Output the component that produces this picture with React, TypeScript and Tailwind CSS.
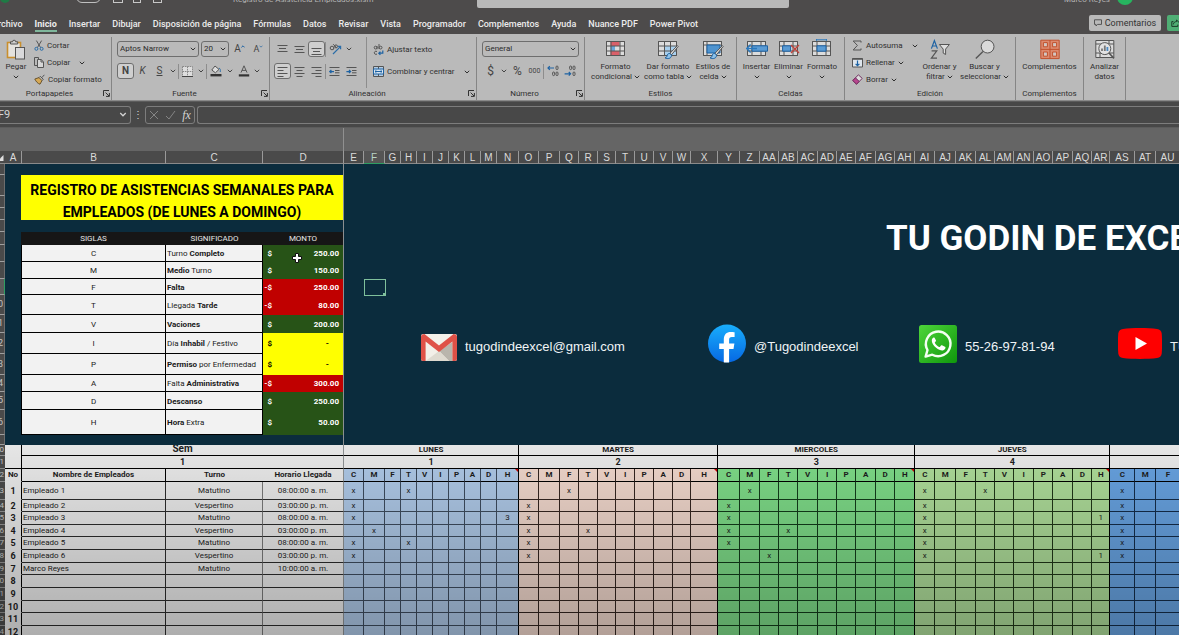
import type { ReactNode } from "react";

const UI = "font-[Roboto,sans-serif]";
const CELL = "font-[Roboto,sans-serif]";

/* ---------- small glyphs ---------- */

function Chevron({ className = "w-[6px] h-[4px]" }: { className?: string }) {
  return (
    <svg viewBox="0 0 6 4" className={`shrink-0 ${className}`} fill="none" stroke="currentColor" strokeWidth="1" aria-hidden="true">
      <path d="M.8.8 3 3 5.2.8" />
    </svg>
  );
}

function Icon({ size = "w-[12px] h-[12px]", box = "0 0 12 12", children }: { size?: string; box?: string; children: ReactNode }) {
  return (
    <svg viewBox={box} className={`shrink-0 ${size}`} fill="none" stroke="#555" strokeWidth="1" aria-hidden="true">
      {children}
    </svg>
  );
}

const PasteIcon = () => (
  <Icon size="w-[20px] h-[22px]" box="0 0 20 22">
    <rect x="1.5" y="3.5" width="13" height="15" fill="#e4e2de" stroke="#c98f2e" strokeWidth="1.6" />
    <path d="M4.5 5V2.8h2a1.6 1.6 0 0 1 3.2 0h2V5z" fill="#cfcfcf" stroke="#555" />
    <rect x="9.5" y="8.5" width="9" height="11.5" fill="#d9d9db" stroke="#555" />
  </Icon>
);
const CutIcon = () => (
  <Icon size="w-[10px] h-[11px]" box="0 0 10 11">
    <path d="M2.4.6 6.6 7.6M7.6.6 3.4 7.6" />
    <circle cx="2.4" cy="8.8" r="1.5" stroke="#2a6da8" />
    <circle cx="7.6" cy="8.8" r="1.5" stroke="#2a6da8" />
  </Icon>
);
const CopyIcon = () => (
  <Icon size="w-[10px] h-[11px]" box="0 0 10 11">
    <path d="M3.5 8.5h-3v-8h4v2" />
    <path d="M3.5 2.5h3.6l2.4 2.3v5.7h-6z" fill="#d6d6d6" />
    <path d="M7 2.6V5h2.4" />
  </Icon>
);
const BrushIcon = () => (
  <Icon size="w-[11px] h-[11px]" box="0 0 11 11">
    <path d="M.8 5 5 3.6l3 3L6 10.2C3.8 9.6 2 7.6.8 5z" fill="#d7a955" stroke="#6b5530" />
    <path d="m5 3.6 1.3-1.3 3 3L8 6.6M7.8 3.6 10.4.8" />
  </Icon>
);
const AlignIcon = ({ lines }: { lines: string }) => (
  <Icon size="w-[11px] h-[11px]" box="0 0 11 11">
    <path d={lines} />
  </Icon>
);
const CellsIcon = () => (
  <Icon size="w-[11px] h-[11px]" box="0 0 11 11">
    <path d="M.5.5h10v10H.5zM5.5.5v10M.5 5.5h10" fill="#dedede" stroke="#888" strokeDasharray="1.6 .8" />
    <path d="M0 10.5h11" stroke="#444" />
  </Icon>
);
const FillIcon = () => (
  <Icon size="w-[12px] h-[12px]" box="0 0 12 12">
    <path d="M5 1 1.8 5 5.4 7.8 9 4.4z" fill="#ddd" />
    <path d="M9 3c1.4.8 1.6 2 1.2 4" stroke="#2a6da8" />
    <path d="M.5 10.2h11" strokeWidth="2.4" stroke="#333" />
  </Icon>
);
const FontColorIcon = () => (
  <Icon size="w-[12px] h-[12px]" box="0 0 12 12">
    <path d="M3 7.6 6 .8l3 6.8M4 5.4h4" />
    <path d="M.8 10.4h10.4" strokeWidth="2.2" stroke="#333" />
  </Icon>
);
const OrientIcon = () => (
  <Icon size="w-[13px] h-[12px]" box="0 0 13 12">
    <circle cx="3" cy="5" r="1.8" />
    <path d="m4.600 6.200.600-.400M4.200 1.200l3.200 3.400" />
    <circle cx="7" cy="3.400" r="1.500" />
    <path d="M4 11 11.400 3.600M8.800 3.400h2.800v2.800" stroke="#2a6da8" strokeWidth="1.2" />
  </Icon>
);
const IndentIcon = ({ out = false }: { out?: boolean }) => (
  <Icon size="w-[11px] h-[11px]" box="0 0 11 11">
    <path d="M.5 1.5h10M6 4.5h4.5M6 6.800h4.5M.5 9.5h10" />
    <path d={out ? "M5 5.6H.8M2.4 4 .8 5.6l1.6 1.6" : "M.4 5.6h4.2M3 4l1.6 1.6L3 7.2"} stroke="#1d62a3" strokeWidth="1.2" />
  </Icon>
);
const WrapIcon = () => (
  <Icon size="w-[11px] h-[12px]" box="0 0 11 12">
    <circle cx="2.6" cy="3.6" r="1.4" />
    <path d="M4 2v3.2M6 0v5" />
    <circle cx="7.6" cy="3.6" r="1.4" />
    <path d="M4 7.6a1.6 1.6 0 1 0 0 2.4" />
    <path d="M9.8 6.4v2.8H6M7.4 7.6 5.8 9.2l1.6 1.6" stroke="#1d62a3" strokeWidth="1.2" />
  </Icon>
);
const MergeIcon = () => (
  <Icon size="w-[11px] h-[11px]" box="0 0 11 11">
    <path d="M.5.5h10v10H.5zM5.5.5v2.4M5.5 8v2.4" fill="#b3cce4" />
    <path d="M.5 3h10v5H.5z" fill="#d9e5f0" stroke="#1d62a3" />
    <path d="M2 5.5h7M3.4 4.2 2 5.5l1.4 1.3M7.6 4.2 9 5.5 7.6 6.8" stroke="#1d62a3" />
  </Icon>
);
const DecimalIcon = ({ less = false }: { less?: boolean }) => (
  <Icon size="w-[12px] h-[12px]" box="0 0 12 12">
    <rect x="9" y="1" width="2" height="3.6" rx="1" />
    <rect x="9" y="7" width="2" height="3.6" rx="1" />
    {less ? <rect x="5.6" y="1" width="2" height="3.6" rx="1" /> : <rect x="5.6" y="7" width="2" height="3.6" rx="1" />}
    <path d={less ? "M.6 8.8h6M4.8 7l1.8 1.8-1.8 1.8" : "M7 3H1M2.8 1.2 1 3l1.8 1.8"} stroke="#1d62a3" strokeWidth="1.2" />
  </Icon>
);

function GridIcon({ children }: { children?: ReactNode }) {
  return (
    <Icon size="w-[22px] h-[21px]" box="0 0 22 21">
      <path d="M1.5 2.5h18v14h-18z" fill="#dcdcdc" />
      {children}
    </Icon>
  );
}
const GRID = "M1.5 2.5h18v14h-18zM1.5 7h18M1.5 12h18M6 2.5v14M15 2.5v14";
const BRUSH = (
  <>
    <path d="M20.4 6.6 13 14.2l1.6 1.6 6.6-8.4z" fill="#dcdcdc" />
    <path d="M12.8 14.4c-2 0-2.6 1.2-2.8 2.8-.2 1-1 1.4-2 1.6 2.8 1.6 6.4.8 6.6-2.6z" fill="#8fc3ea" stroke="#1d62a3" />
  </>
);
const CondIcon = () => (
  <GridIcon>
    <path d="M5.5 2.5h9v4.4h-9zM5.5 12h9v4.5h-9z" fill="#d9606a" stroke="none" />
    <path d="M5.5 7h4.5v5H5.5z" fill="#6aa5d8" stroke="none" />
    <path d={GRID} />
  </GridIcon>
);
const TableIcon = () => (
  <GridIcon>
    <path d="M8 7h11.5v9.5H8z" fill="#a9d0ee" stroke="none" />
    <path d="M1.5 2.5h18v14h-18zM1.5 7h18M1.5 12h18M7.5 2.5v14M13.5 2.5v14" />
    {BRUSH}
  </GridIcon>
);
const StylesIcon = () => (
  <GridIcon>
    <path d="M1.5 2.5h18v14h-18zM1.5 6h18M5 2.5v14" />
    <path d="M5 6h13v8H5z" fill="#4f94d0" stroke="#1d62a3" />
    {BRUSH}
  </GridIcon>
);
const InsertIcon = () => (
  <GridIcon>
    <path d={GRID} />
    <path d="M6 6.8h15.5v5.4H6z" fill="#5a9bd4" stroke="#1d62a3" />
    <path d="M11 9.5H1M4.6 5.6.8 9.5l3.8 3.9" stroke="#2a78bd" strokeWidth="1.4" />
  </GridIcon>
);
const DeleteIcon = () => (
  <GridIcon>
    <path d={GRID} />
    <path d="M4.6 6.8h8v5.4h-8z" fill="#5a9bd4" stroke="#1d62a3" />
    <path d="m13 6 8 8M21 6l-8 8" stroke="#c1443c" strokeWidth="1.4" />
  </GridIcon>
);
const FormatIcon = () => (
  <GridIcon>
    <path d={GRID} />
    <path d="M6 6.8h9v5.4H6z" fill="#5a9bd4" stroke="#1d62a3" />
    <path d="M5.5.8h10M5.5 0v1.8M15.5 0v1.8" stroke="#2a78bd" />
  </GridIcon>
);
const SortIcon = () => (
  <Icon size="w-[22px] h-[21px]" box="0 0 22 21">
    <path d="M2.4 9.6 5.4 1.6l3 8M3.4 7h4" stroke="#1d62a3" strokeWidth="1.2" />
    <path d="M2.6 11.8h5.2l-5.4 7.4H8" strokeWidth="1.2" />
    <path d="M10.4 5.5h10l-3.8 4.6v5.4l-2.4-1.4v-4z" fill="#dedede" />
  </Icon>
);
const FindIcon = () => (
  <Icon size="w-[22px] h-[21px]" box="0 0 22 21">
    <circle cx="13.6" cy="7.6" r="6.4" fill="#dadada" />
    <path d="M9 12.4 1.8 19.6" strokeWidth="1.4" />
  </Icon>
);
const AddinsIcon = () => (
  <Icon size="w-[20px] h-[21px]" box="0 0 20 21">
    <path d="M.8 1.2h18.4v18.4H.8zM10 1v18.6M.8 10.4h18.4" fill="#dd8a6e" stroke="#c2512c" />
    <path d="M3.4 3.6h4v4.2h-4zM12.6 3.6h4v4.2h-4zM3.4 13h4v4.2h-4zM12.6 13h4v4.2h-4z" fill="#d3c7c2" stroke="#c2512c" />
  </Icon>
);
const AnalyzeIcon = () => (
  <Icon size="w-[20px] h-[21px]" box="0 0 20 21">
    <path d="M.8 1.5h18v17H.8zM.8 5h18M.8 14h18M5 14v4.5M14 1.5V5" fill="#dcdcdc" />
    <circle cx="9.8" cy="9.6" r="6" fill="#e2e2e2" />
    <path d="M7 12V9.4M9.8 12V6.6" strokeWidth="1.8" stroke="#777" />
    <path d="M12.4 12V8" strokeWidth="1.8" stroke="#4a8ac4" />
    <path d="m14 14 5 5.4" strokeWidth="1.6" />
  </Icon>
);
const SigmaIcon = () => (
  <Icon size="w-[11px] h-[11px]" box="0 0 11 11">
    <path d="M9 2.6V1H1.2l4.2 4.4L1.2 10H9V8.4" />
  </Icon>
);
const FillDownIcon = () => (
  <Icon size="w-[11px] h-[11px]" box="0 0 11 11">
    <path d="M.5 1.5h10v8.5H.5z" fill="#dfe6ec" />
    <path d="M.5 2h10" strokeWidth="1.6" />
    <path d="M5.5 3.6v5M3.6 6.8l1.9 1.9 1.9-1.9" stroke="#1d62a3" strokeWidth="1.2" />
  </Icon>
);
const EraserIcon = () => (
  <Icon size="w-[11px] h-[11px]" box="0 0 11 11">
    <path d="m6.4.8 3.8 3.6-5.6 5.8L.8 6.6z" fill="#ddd" stroke="#703060" />
    <path d="M3.4 3.8 7.2 7.4l-2.6 2.8L.8 6.6z" fill="#b8468e" stroke="#703060" />
  </Icon>
);

/* ---------- ribbon ---------- */

function Group({ width, caption, launcher = false, children }: { width: string; caption: string; launcher?: boolean; children: ReactNode }) {
  return (
    <section className={`flex shrink-0 flex-col border-r border-[#858585] ${width}`}>
      <div className="flex h-[51px]">{children}</div>
      <div className="flex h-[11px] items-center">
        <span className="flex-1 text-center text-[8px] leading-[11px]">{caption}</span>
        {launcher && (
          <button type="button" aria-label={`Opciones de ${caption}`} className="w-[12px]">
            <svg viewBox="0 0 7 7" className="ml-1 h-[7px] w-[7px]" fill="none" stroke="#333" aria-hidden="true">
              <path d="M6 .5H.5V6M2.6 2.6 6 6M6.4 3v3.4H3" />
            </svg>
          </button>
        )}
      </div>
    </section>
  );
}

function SmallButton({ icon, label, arrow = false, far = false }: { icon: ReactNode; label: string; arrow?: boolean; far?: boolean }) {
  return (
    <button type="button" className="flex h-[17px] items-center gap-[3px] whitespace-nowrap text-[8px] leading-[10px]">
      {icon}
      <span>{label}</span>
      {arrow && <span className={far ? "pl-[6px]" : ""}><Chevron /></span>}
    </button>
  );
}

function BigButton({ icon, top, bottom, arrow = false, width }: { icon: ReactNode; top: string; bottom?: string; arrow?: boolean; width: string }) {
  return (
    <button type="button" className={`flex shrink-0 flex-col items-center pt-[2px] text-[8px] leading-[10px] whitespace-nowrap ${width}`}>
      <span className="flex h-[23px] items-start">{icon}</span>
      <span>{top}</span>
      <span className="flex h-[10px] items-center gap-[2px]">
        {bottom}
        {arrow && <Chevron />}
      </span>
    </button>
  );
}

function Tool({ label, on = false, width = "w-[17px]", children }: { label: string; on?: boolean; width?: string; children: ReactNode }) {
  return (
    <button
      type="button"
      aria-label={label}
      className={`flex h-[16px] shrink-0 items-center justify-center rounded-[3px] text-[10px] leading-none text-[#444] ${width} ${on ? "border border-[#6e6e6e] bg-[#cfcfcf]" : ""}`}
    >
      {children}
    </button>
  );
}

const Sep = () => <span className="h-[15px] w-px shrink-0 bg-[#8d8d8d]" />;

function Picker({ label, value, width }: { label: string; value: string; width: string }) {
  return (
    <label className={`relative flex h-[16px] shrink-0 items-center rounded-[3px] border border-[#6e6e6e] ${width}`}>
      <select aria-label={label} className="h-[14px] w-full appearance-none bg-transparent pl-[2px] text-[8px] leading-[12px] text-[#2c2c2c]">
        <option>{value}</option>
      </select>
      <span className="pointer-events-none absolute right-[2px] text-[#333]">
        <Chevron />
      </span>
    </label>
  );
}

const TABS = ["Archivo", "Inicio", "Insertar", "Dibujar", "Disposición de página", "Fórmulas", "Datos", "Revisar", "Vista", "Programador", "Complementos", "Ayuda", "Nuance PDF", "Power Pivot"];

function TitleBar() {
  return (
    <div className="flex h-[8px] items-end overflow-hidden text-[8px] leading-[12px] text-[#b5b5b5]">
      <div className="flex w-[233px] shrink-0 items-end pb-[5px]">
        <span className="h-[12px] w-[10px] rounded-full bg-[#1f7a45]" />
        <span className="h-[12px] w-[66px] pl-[10px]">Autoguardado</span>
        <span className="h-[12px] w-[25px] rounded-full border border-[#c0c0c0]" />
        <span className="ml-[12px] h-[12px] w-[10px] border border-[#c8c8c8]" />
        <span className="ml-[10px] h-[12px] w-[8px] border border-[#c8c8c8]" />
        <span className="ml-[12px] h-[12px] w-[9px] border border-[#c8c8c8]" />
      </div>
      <span className="w-[244px] shrink-0 whitespace-nowrap pb-[3px] leading-[10px]">Registro de Asistencia Empleados.xlsm</span>
      <div className="flex h-[14px] w-[312px] shrink-0 items-center rounded-b-[2px] bg-[#b9b9b9] pb-[6px] pl-[34px] text-[#666]">Buscar</div>
      <div className="flex flex-1 items-end justify-end gap-[7px] pr-[46px]">
        <span className="pb-[3px] leading-[10px]">Marco Reyes</span>
        <span className="mb-[3px] h-[16px] w-[16px] rounded-full bg-[#27b45f]" />
      </div>
    </div>
  );
}

function Tabs() {
  return (
    <div className="flex h-[26px] items-center">
      <nav className="-ml-[8px] flex items-center gap-[12px] pt-[6px] text-[9px] font-medium leading-[12px] text-[#ececec]">
        {TABS.map((t) => (
          <a key={t} href="#" className={`relative whitespace-nowrap ${t === "Inicio" ? "font-bold" : ""}`}>
            {t}
            {t === "Inicio" && <span className="absolute inset-x-0 -bottom-[2px] h-[2px] bg-[#7fb79c]" />}
          </a>
        ))}
      </nav>
      <div className="ml-auto flex shrink-0 gap-[6px] pt-[4px]">
        <button type="button" className="flex h-[16px] w-[72px] items-center justify-center gap-[3px] rounded-[2px] bg-[#b9b9b9] text-[9px] leading-none text-[#333]">
          <Icon size="w-[8px] h-[8px]" box="0 0 8 8">
            <path d="M.5.8h7v4.6H3.6L2 7V5.4H.5z" />
          </Icon>
          Comentarios
        </button>
        <button type="button" aria-label="Compartir" className="flex h-[16px] w-[12px] items-center justify-end rounded-l-[2px] bg-[#4fae74]">
          <Icon size="w-[8px] h-[8px]" box="0 0 8 8">
            <path d="M2.4 2.6H.8v4.8h6V5.6M2.4 5.4c.2-2 1.4-2.8 3.2-2.8V1L8 3.4" stroke="#1c3a28" />
          </Icon>
        </button>
      </div>
    </div>
  );
}

function Ribbon() {
  return (
    <div className="flex h-[67px] overflow-hidden border-b border-[#8a8a8a] bg-[#bababa] pt-[3px] text-[#303030]">
      <Group width="w-[112px]" caption="Portapapeles" launcher>
        <BigButton icon={<PasteIcon />} top="Pegar" arrow width="ml-[3px] w-[26px]" />
        <div className="ml-[5px] flex flex-col">
          <SmallButton icon={<CutIcon />} label="Cortar" />
          <SmallButton icon={<CopyIcon />} label="Copiar" arrow far />
          <SmallButton icon={<BrushIcon />} label="Copiar formato" />
        </div>
      </Group>

      <Group width="w-[158px]" caption="Fuente" launcher>
        <div className="flex flex-col gap-[6px] pt-[4px] pl-[5px]">
          <div className="flex items-center gap-[2px]">
            <Picker label="Fuente" value="Aptos Narrow" width="w-[82px]" />
            <Picker label="Tamaño de fuente" value="20" width="w-[28px]" />
            <Tool label="Aumentar tamaño">
              A<span className="pb-[5px] text-[#1d62a3]"><svg viewBox="0 0 4 3" className="h-[3px] w-[4px]" fill="none" stroke="currentColor" aria-hidden="true"><path d="M.4 2.4 2 .8l1.6 1.6" /></svg></span>
            </Tool>
            <Tool label="Reducir tamaño"><span className="text-[9px]">A</span><span className="pb-[5px] text-[#1d62a3]"><Chevron className="h-[3px] w-[4px]" /></span></Tool>
          </div>
          <div className="flex items-center">
            <Tool label="Negrita" on><b>N</b></Tool>
            <Tool label="Cursiva"><i>K</i></Tool>
            <Tool label="Subrayado"><span className="underline">S</span></Tool>
            <Tool label="Opciones de subrayado" width="w-[10px]"><Chevron /></Tool>
            <Sep />
            <Tool label="Bordes"><CellsIcon /></Tool>
            <Tool label="Opciones de bordes" width="w-[10px]"><Chevron /></Tool>
            <Sep />
            <Tool label="Color de relleno" width="w-[18px]"><FillIcon /></Tool>
            <Tool label="Opciones de relleno" width="w-[10px]"><Chevron /></Tool>
            <Tool label="Color de fuente"><FontColorIcon /></Tool>
            <Tool label="Opciones de color" width="w-[10px]"><Chevron /></Tool>
          </div>
        </div>
      </Group>

      <Group width="w-[207px]" caption="Alineación" launcher>
        <div className="flex w-[96px] flex-col gap-[6px] pt-[4px] pl-[4px]">
          <div className="flex items-center">
            <Tool label="Alinear arriba"><AlignIcon lines="M.5 1.5h10M2 4.5h7M.5 7.5h10" /></Tool>
            <Tool label="Alinear en medio"><AlignIcon lines="M.5 2.5h10M2 5.5h7M.5 8.5h10" /></Tool>
            <Tool label="Alinear abajo" on><AlignIcon lines="M.5 4.5h10M2 7.5h7M.5 10.5h10" /></Tool>
            <Sep />
            <Tool label="Orientación" width="w-[18px]"><OrientIcon /></Tool>
            <Tool label="Opciones de orientación" width="w-[10px]"><Chevron /></Tool>
          </div>
          <div className="flex items-center">
            <Tool label="Alinear a la izquierda" on><AlignIcon lines="M.5 1.5h10M.5 4.5h6M.5 7.5h10M.5 10.5h6" /></Tool>
            <Tool label="Centrar"><AlignIcon lines="M.5 1.5h10M2.5 4.5h6M.5 7.5h10M2.5 10.5h6" /></Tool>
            <Tool label="Alinear a la derecha"><AlignIcon lines="M.5 1.5h10M4.5 4.5h6M.5 7.5h10M4.5 10.5h6" /></Tool>
            <Sep />
            <Tool label="Disminuir sangría"><IndentIcon out /></Tool>
            <Tool label="Aumentar sangría"><IndentIcon /></Tool>
          </div>
        </div>
        <div className="flex flex-col gap-[5px] border-l border-[#8d8d8d] pt-[4px] pl-[6px]">
          <SmallButton icon={<WrapIcon />} label="Ajustar texto" />
          <SmallButton icon={<MergeIcon />} label="Combinar y centrar" arrow far />
        </div>
      </Group>

      <Group width="w-[108px]" caption="Número" launcher>
        <div className="flex flex-col gap-[6px] pt-[4px] pl-[5px]">
          <Picker label="Formato de número" value="General" width="w-[97px]" />
          <div className="flex items-center">
            <Tool label="Formato de moneda"><span className="text-[12px]">$</span></Tool>
            <Tool label="Opciones de moneda" width="w-[10px]"><Chevron /></Tool>
            <Tool label="Estilo porcentual"><span className="text-[12px]">%</span></Tool>
            <Tool label="Estilo millares"><span className="text-[7px]">000</span></Tool>
            <Sep />
            <Tool label="Aumentar decimales"><DecimalIcon /></Tool>
            <Tool label="Disminuir decimales"><DecimalIcon less /></Tool>
          </div>
        </div>
      </Group>

      <Group width="w-[152px]" caption="Estilos">
        <BigButton icon={<CondIcon />} top="Formato" bottom="condicional" arrow width="ml-[4px] w-[53px]" />
        <BigButton icon={<TableIcon />} top="Dar formato" bottom="como tabla" arrow width="w-[52px]" />
        <BigButton icon={<StylesIcon />} top="Estilos de" bottom="celda" arrow width="w-[38px]" />
      </Group>

      <Group width="w-[108px]" caption="Celdas">
        <BigButton icon={<InsertIcon />} top="Insertar" arrow width="ml-[3px] w-[33px]" />
        <BigButton icon={<DeleteIcon />} top="Eliminar" arrow width="w-[31px]" />
        <BigButton icon={<FormatIcon />} top="Formato" arrow width="w-[36px]" />
      </Group>

      <Group width="w-[171px]" caption="Edición">
        <div className="flex w-[74px] shrink-0 flex-col pl-[7px]">
          <SmallButton icon={<SigmaIcon />} label="Autosuma" arrow far />
          <SmallButton icon={<FillDownIcon />} label="Rellenar" arrow />
          <SmallButton icon={<EraserIcon />} label="Borrar" arrow />
        </div>
        <BigButton icon={<SortIcon />} top="Ordenar y" bottom="filtrar" arrow width="w-[41px]" />
        <BigButton icon={<FindIcon />} top="Buscar y" bottom="seleccionar" arrow width="w-[49px]" />
      </Group>

      <Group width="w-[68px]" caption="Complementos">
        <BigButton icon={<AddinsIcon />} top="Complementos" width="w-full" />
      </Group>

      <Group width="w-[42px]" caption="">
        <BigButton icon={<AnalyzeIcon />} top="Analizar" bottom="datos" width="w-full" />
      </Group>
    </div>
  );
}

function FormulaBar() {
  return (
    <div className="flex h-[27px] items-center border-y border-[#5c5c5c] bg-[#484848] text-[#d5d5d5]">
      <label className="relative flex h-[18px] w-[131px] items-center rounded-r-[3px] border border-l-0 border-[#7d7d7d]">
        <input aria-label="Cuadro de nombres" defaultValue="F9" className="-ml-[2px] w-full bg-transparent text-[11px] leading-[14px]" />
        <span className="absolute right-[3px]"><Chevron className="h-[5px] w-[8px]" /></span>
      </label>
      <span className="w-[14px] text-center text-[10px] leading-none">⋮</span>
      <div className="flex h-[18px] w-[50px] items-center justify-around rounded-[3px] border border-[#7d7d7d]">
        <button type="button" aria-label="Cancelar">
          <svg viewBox="0 0 10 10" className="h-[10px] w-[10px]" stroke="#858585" fill="none"><path d="m1 1 8 8M9 1 1 9" /></svg>
        </button>
        <button type="button" aria-label="Introducir">
          <svg viewBox="0 0 11 10" className="h-[10px] w-[11px]" stroke="#858585" fill="none"><path d="m1 6 3 3 6-8" /></svg>
        </button>
        <button type="button" className="font-['Liberation_Serif',serif] text-[12px] leading-none italic">fx</button>
      </div>
      <input aria-label="Barra de fórmulas" className="ml-[2px] h-[18px] min-w-0 flex-1 rounded-l-[3px] border border-r-0 border-[#7d7d7d] bg-transparent px-1 text-[10px]" />
    </div>
  );
}

/* ---------- sheet ---------- */

const WIDTHS = [
  5, 17, 144, 97, 81,
  20, 21, 16, 16, 16, 16, 16, 16, 16, 22,
  20, 21, 19, 19, 18, 19, 19, 19, 18, 27,
  22, 20, 19, 19, 20, 19, 19, 20, 19, 20,
  20, 21, 20, 19, 19, 20, 19, 20, 19, 18,
  25, 21, 24,
];

const LETTERS = "A B C D E F G H I J K L M N O P Q R S T U V W X Y Z AA AB AC AD AE AF AG AH AI AJ AK AL AM AN AO AP AQ AR AS AT AU".split(" ");

const Cols = () => (
  <colgroup>
    {WIDTHS.map((w, i) => (
      <col key={i} style={{ width: w }} />
    ))}
  </colgroup>
);

function ColumnHeaders() {
  return (
    <table className="w-full table-fixed border-separate border-spacing-0 bg-[#4a4a4a] font-['Liberation_Sans',sans-serif] text-[10px] leading-[10px] text-[#dadada]">
      <Cols />
      <thead>
        <tr>
          <th className="h-[13px] overflow-hidden border-b border-[#8a8a8a] p-0">
            <svg viewBox="0 0 5 11" className="block h-[11px] w-[5px]"><path d="M3.5 3v6H0V6.5z" fill="#e0e0e0" /></svg>
          </th>
          {LETTERS.map((l) => (
            <th
              key={l}
              scope="col"
              className={`h-[13px] overflow-hidden border-r border-b border-r-[#9a9a9a] px-0 pt-[2px] pb-0 text-center font-normal ${l === "F" ? "border-b-[#2f9e62] bg-[#555] text-[#b9d4c6]" : "border-b-[#8a8a8a]"}`}
            >
              {l}
            </th>
          ))}
        </tr>
      </thead>
    </table>
  );
}

const ROW_HEADS: [string, string][] = [
  ["h-[11px]", ""], ["h-[21px]", ""], ["h-[12px]", ""], ["h-[12px]", ""], ["h-[12px]", ""], ["h-[13px]", ""],
  ["h-[17px]", ""], ["h-[17px]", ""], ["h-[16px]", ""], ["h-[20px]", "0"], ["h-[18px]", "1"], ["h-[21px]", "2"],
  ["h-[21px]", "3"], ["h-[17px]", "4"], ["h-[18px]", "5"], ["h-[25px]", "6"], ["h-[10px]", ""],
];

const GREEN = "bg-[#275317] text-white";
const RED = "bg-[#c00000] text-white";
const YELLOW = "bg-[#ffff00] text-black";

const LEGEND: { key: string; text: ReactNode; sign: string; amount: string; tone: string; h: string }[] = [
  { key: "C", text: <>Turno <b>Completo</b></>, sign: "$", amount: "250.00", tone: GREEN, h: "h-[17px]" },
  { key: "M", text: <><b>Medio</b> Turno</>, sign: "$", amount: "150.00", tone: GREEN, h: "h-[17px]" },
  { key: "F", text: <b>Falta</b>, sign: "-$", amount: "250.00", tone: RED, h: "h-[16px]" },
  { key: "T", text: <>Llegada <b>Tarde</b></>, sign: "-$", amount: "80.00", tone: RED, h: "h-[20px]" },
  { key: "V", text: <b>Vaciones</b>, sign: "$", amount: "200.00", tone: GREEN, h: "h-[18px]" },
  { key: "I", text: <>Día <b>Inhabil</b> / Festivo</>, sign: "$", amount: "-", tone: YELLOW, h: "h-[21px]" },
  { key: "P", text: <><b>Permiso</b> por Enfermedad</>, sign: "$", amount: "-", tone: YELLOW, h: "h-[21px]" },
  { key: "A", text: <>Falta <b>Administrativa</b></>, sign: "-$", amount: "300.00", tone: RED, h: "h-[17px]" },
  { key: "D", text: <b>Descanso</b>, sign: "$", amount: "250.00", tone: GREEN, h: "h-[18px]" },
  { key: "H", text: <><b>Hora</b> Extra</>, sign: "$", amount: "50.00", tone: GREEN, h: "h-[25px]" },
];

function Legend() {
  return (
    <table className="w-full table-fixed border-separate border-spacing-0 text-[8px] leading-[10px] text-[#1a1a1a]">
      <thead>
        <tr className="bg-[#161616] text-[#e6e6e6]">
          <th scope="col" className="h-[13px] w-[145px] p-0 font-normal">SIGLAS</th>
          <th scope="col" className="h-[13px] w-[97px] p-0 font-normal">SIGNIFICADO</th>
          <th scope="col" className="h-[13px] p-0 font-normal">MONTO</th>
        </tr>
      </thead>
      <tbody>
        {LEGEND.map((r) => (
          <tr key={r.key}>
            <td className={`border-x border-b border-black bg-[#f2f2f2] px-0 pt-[2px] pb-0 text-center ${r.h}`}>{r.key}</td>
            <td className="border-r border-b border-black bg-[#f2f2f2] pt-[2px] pr-0 pb-0 pl-[1px] whitespace-nowrap">{r.text}</td>
            <td className={`px-0 pt-[1px] pb-0 font-bold ${r.tone}`}>
              <div className="flex pr-[4px]">
                <span className="w-[9px] text-right">{r.sign}</span>
                <span className={`flex-1 text-right ${r.amount === "-" ? "pr-[10px]" : ""}`}>{r.amount}</span>
              </div>
            </td>
          </tr>
        ))}
      </tbody>
    </table>
  );
}

const GmailLogo = () => (
  <svg viewBox="0 0 36 27" className="mt-2 h-[27px] w-[36px] shrink-0" aria-hidden="true">
    <rect width="36" height="27" rx="2" fill="#f2efe8" />
    <path d="M18 17 31.400 8v19H28z" fill="#b9b5ac" />
    <path d="M18 17 4.600 27H28z" fill="#dedad0" />
    <path d="M0 2.500V25a2 2 0 0 0 2 2h2.600V7.600L18 18 31.400 7.600V27H34a2 2 0 0 0 2-2V2.500C36 .8 34 0 32.600 0L18 11.600 3.400 0C2 0 0 .8 0 2.500z" fill="#df5147" />
    <path d="M4.600 0h26.800L18 10.600z" fill="#f4f1ea" />
  </svg>
);
const FacebookLogo = () => (
  <svg viewBox="0 0 38 38" className="h-[39px] w-[38px] shrink-0" aria-hidden="true">
    <defs>
      <linearGradient id="fb" x1="0" y1="0" x2="0" y2="1">
        <stop offset="0" stopColor="#19aefc" />
        <stop offset="1" stopColor="#0668e3" />
      </linearGradient>
    </defs>
    <circle cx="19" cy="19" r="19" fill="url(#fb)" />
    <path d="M15.800 38V24.600H11.200V19h4.600v-4.200c0-4.900 2.800-7.400 7-7.400 1.600 0 3 .2 3.800.4v4.800h-2.700c-2.200 0-2.800 1.200-2.800 2.800V19h5.300l-.9 5.600h-4.400V38z" fill="#fff" />
  </svg>
);
const WhatsappLogo = () => (
  <svg viewBox="0 0 38 38" className="h-[38px] w-[38px] shrink-0" aria-hidden="true">
    <defs>
      <linearGradient id="wa" x1="0" y1="0" x2="1" y2="1">
        <stop offset="0" stopColor="#4ed53a" />
        <stop offset="1" stopColor="#0f970c" />
      </linearGradient>
    </defs>
    <rect width="38" height="38" rx="2.500" fill="url(#wa)" />
    <path d="M6.600 31.600 8.500 25A12.300 12.300 0 1 1 13.300 29.700z" fill="none" stroke="#f4fff2" strokeWidth="2.400" strokeLinejoin="round" />
    <path d="M14.700 12.400c-.7 0-2.100 1.200-1.900 3.500.2 2.200 1.900 4.700 4.300 6.800 2.500 2.100 5 3 6.700 2.700 1.600-.3 2.700-1.500 2.700-2.900 0-.4-.2-.6-.5-.8l-3-1.400c-.4-.2-.7-.1-1 .3l-1 1.200c-.3.300-.5.300-.9.100-1.800-.8-3.300-2.200-4.200-3.900-.2-.3-.1-.6.1-.8l.8-1c.2-.3.300-.5.100-.9l-1.200-2.400c-.2-.4-.5-.5-1-.5z" fill="#fff" />
  </svg>
);
const YoutubeLogo = () => (
  <svg viewBox="0 0 44 31" className="h-[31px] w-[44px] shrink-0" aria-hidden="true">
    <path d="M5 1C14-.2 30-.2 39 1c3 .5 4.400 2 4.700 4.500.5 6 .5 14 0 20C43.400 28 42 29.500 39 30c-9 1.200-25 1.200-34 0-3-.5-4.400-2-4.700-4.500-.5-6-.5-14 0-20C.6 3 2 1.500 5 1z" fill="#fe0000" />
    <path d="M17.500 9v13L29 15.500z" fill="#fff" />
  </svg>
);

function Contact({ logo, text, width }: { logo: ReactNode; text: string; width: string }) {
  return (
    <a href="#" className={`flex shrink-0 items-center gap-2 ${width}`}>
      {logo}
      <span className="pt-[6px]">{text}</span>
    </a>
  );
}

function UpperPane() {
  return (
    <div className={`flex overflow-hidden bg-[#0b2c3d] ${CELL}`}>
      <div className="w-[5px] shrink-0 overflow-hidden bg-[#4a4a4a] text-[9px] leading-none text-[#c4c4c4]">
        {ROW_HEADS.map(([h, n], i) => (
          <div key={i} className={`flex items-center justify-end overflow-hidden border-r border-b border-b-[#a0a0a0] pr-[1px] ${i === 8 ? "border-r-[#2f9e62] bg-[#5b5b5b]" : "border-r-[#6d6d6d]"} ${h}`}>
            {n}
          </div>
        ))}
      </div>
      <div className="relative w-[339px] shrink-0 border-r border-[#8b8f91] pt-[11px] pl-[16px]">
        <h1 className="flex h-[45px] items-center justify-center bg-[#ffff00] pt-[6px] text-center text-[14px] leading-[22px] font-bold whitespace-nowrap text-black">
          REGISTRO DE ASISTENCIAS SEMANALES PARA
          <br />
          EMPLEADOS (DE LUNES A DOMINGO)
        </h1>
        <div className="pt-[12px]">
          <Legend />
        </div>
        <svg viewBox="0 0 10 10" className="absolute top-[89px] left-[287px] h-[10px] w-[10px]" aria-hidden="true">
          <path d="M3.500.5h3v3h3v3h-3v3h-3v-3h-3v-3h3z" fill="#fff" stroke="#111" />
        </svg>
      </div>
      <div className="relative flex min-w-0 flex-1 flex-col overflow-hidden">
        <div className="absolute top-[115px] left-[20px] h-[17px] w-[22px] border border-[#7fc09c]">
          <span className="absolute -right-[1px] -bottom-[1px] h-[3px] w-[3px] bg-[#7fc09c]" />
        </div>
        <h2 className="mt-[54px] ml-[542px] text-[35px] leading-[42px] font-bold whitespace-nowrap text-white">TU GODIN DE EXCEL</h2>
        <div className="mt-[64px] ml-[77px] flex h-[39px] items-center font-['Liberation_Sans',sans-serif] text-[13px] leading-[18px] whitespace-nowrap text-[#f0f4f6]">
          <Contact logo={<GmailLogo />} text="tugodindeexcel@gmail.com" width="w-[287px]" />
          <Contact logo={<FacebookLogo />} text="@Tugodindeexcel" width="w-[211px]" />
          <Contact logo={<WhatsappLogo />} text="55-26-97-81-94" width="w-[199px]" />
          <Contact logo={<YoutubeLogo />} text="TU GODIN DE EXCEL" width="" />
        </div>
      </div>
    </div>
  );
}

const CODES = ["C", "M", "F", "T", "V", "I", "P", "A", "D", "H"];
const DAYS = [
  { name: "LUNES", fill: "bg-[#abc5e3]", line: "border-[#3c4a5c]", n: 10 },
  { name: "MARTES", fill: "bg-[#ecd3c8]", line: "border-[#33241f]", n: 10 },
  { name: "MIERCOLES", fill: "bg-[#7bd785]", line: "border-[#123a1a]", n: 10 },
  { name: "JUEVES", fill: "bg-[#aad896]", line: "border-[#1f3517]", n: 10 },
  { name: "", fill: "bg-[#659fdc]", line: "border-[#142c48]", n: 3 },
];

type Person = { name: string; shift: string; time: string; marks: Record<string, string> };
const M = "Matutino";
const V = "Vespertino";
const PEOPLE: Person[] = [
  { name: "Empleado 1", shift: M, time: "08:00:00 a. m.", marks: { "0C": "x", "0T": "x", "1F": "x", "2M": "x", "3C": "x", "3T": "x", "4C": "x" } },
  { name: "Empleado 2", shift: V, time: "03:00:00 p. m.", marks: { "0C": "x", "1C": "x", "2C": "x", "3C": "x", "4C": "x" } },
  { name: "Empleado 3", shift: M, time: "08:00:00 a. m.", marks: { "0C": "x", "0H": "3", "1C": "x", "2C": "x", "3C": "x", "3H": "1", "4C": "x" } },
  { name: "Empleado 4", shift: V, time: "03:00:00 p. m.", marks: { "0M": "x", "1C": "x", "1T": "x", "2C": "x", "2T": "x", "3C": "x", "4C": "x" } },
  { name: "Empleado 5", shift: M, time: "08:00:00 a. m.", marks: { "0C": "x", "0T": "x", "1C": "x", "2C": "x", "3C": "x", "4C": "x" } },
  { name: "Empleado 6", shift: V, time: "03:00:00 p. m.", marks: { "0C": "x", "1C": "x", "2F": "x", "3C": "x", "3H": "1", "4C": "x" } },
  { name: "Marco Reyes", shift: M, time: "10:00:00 a. m.", marks: {} },
  ...Array.from({ length: 5 }, () => ({ name: "", shift: "", time: "", marks: {} })),
];
const ROW_H = ["h-[18px]", "h-[12px]", "h-[13px]", "h-[12px]", "h-[13px]", "h-[13px]", "h-[12px]", "h-[13px]", "h-[13px]", "h-[12px]", "h-[13px]", "h-[13px]"];

function RowHead({ n, h }: { n: string; h: string }) {
  return (
    <th scope="row" className={`overflow-hidden border-b border-[#8f8f8f] bg-[#4a4a4a] p-0 font-normal text-[#c4c4c4] ${h}`}>
      <div className="flex w-[5px] justify-end pr-[1px]">{n}</div>
    </th>
  );
}

function Attendance() {
  return (
    <div className={`relative ${CELL}`}>
      <table className="w-full table-fixed border-separate border-spacing-0 bg-[#e6e6e6] text-center text-[8px] leading-[10px] text-[#1c1c1c]">
        <Cols />
        <thead>
          <tr>
            <RowHead n="0" h="h-[11px]" />
            <td className="border-r border-black p-0" />
            <th colSpan={3} className="border-r border-b border-r-[#8b8f91] border-b-black p-0 text-[10px]">
              <div className="flex h-[10px] items-end justify-center overflow-hidden leading-[13px]">Sem</div>
            </th>
            {DAYS.map((d, i) => (
              <th key={i} colSpan={d.n} className="border-r border-b border-black p-0">{d.name}</th>
            ))}
          </tr>
          <tr>
            <RowHead n="1" h="h-[13px]" />
            <td className="border-r border-b border-black p-0" />
            <th colSpan={3} className="border-r border-b border-r-[#8b8f91] border-b-black p-0 text-[9px]">1</th>
            {DAYS.map((d, i) => (
              <th key={i} colSpan={d.n} className="border-r border-b border-black p-0 text-[9px]">{d.name && i + 1}</th>
            ))}
          </tr>
          <tr>
            <RowHead n="2" h="h-[13px]" />
            <th scope="col" className="border-r border-b border-r-black border-b-transparent p-0">No</th>
            <th scope="col" className="border-r border-b border-black p-0">Nombre de Empleados</th>
            <th scope="col" className="border-b border-black p-0">Turno</th>
            <th scope="col" className="border-r border-b border-r-[#8b8f91] border-b-black p-0">Horario Llegada</th>
            {DAYS.flatMap((d, i) =>
              CODES.slice(0, d.n).map((c) => (
                <th
                  key={`${i}${c}`}
                  scope="col"
                  className={`relative border-r border-b p-0 ${d.fill} ${c === "H" ? "border-black" : `${d.line} border-b-black`}`}
                >
                  {c}
                  {c === "H" && (
                    <svg viewBox="0 0 3 3" className="absolute top-0 right-0 h-[3px] w-[3px]" aria-hidden="true">
                      <path d="M0 0h3v3z" fill="#c80000" />
                    </svg>
                  )}
                </th>
              )),
            )}
          </tr>
        </thead>
        <tbody>
          {PEOPLE.map((p, r) => (
            <tr key={r}>
              <RowHead n={String((r + 3) % 10)} h={ROW_H[r]} />
              <th scope="row" className="border-r border-b border-r-black border-b-transparent p-0 text-[9px]">{r + 1}</th>
              <td className="border-r border-b border-[#2b2b2b] py-0 pr-0 pl-[1px] text-left">{p.name}</td>
              <td className="border-r border-b border-[#2b2b2b] border-r-[#777] p-0">{p.shift}</td>
              <td className="border-r border-b border-[#2b2b2b] border-r-[#8b8f91] p-0">{p.time}</td>
              {DAYS.flatMap((d, i) =>
                CODES.slice(0, d.n).map((c) => (
                  <td key={`${i}${c}`} className={`border-r border-b p-0 ${d.fill} ${d.line} ${c === "H" ? "border-r-black" : ""}`}>
                    {p.marks[`${i}${c}`]}
                  </td>
                )),
              )}
            </tr>
          ))}
        </tbody>
      </table>
      <div className="pointer-events-none absolute inset-0 bg-linear-to-b from-transparent to-black/25" />
    </div>
  );
}

export default function App() {
  return (
    <main className={`h-screen overflow-hidden bg-[#4d4b4b] ${UI}`}>
      <TitleBar />
      <Tabs />
      <Ribbon />
      <FormulaBar />
      <div className="flex h-[23px] bg-[#656565]">
        <div className="w-[344px] border-r border-[#909090]" />
      </div>
      <ColumnHeaders />
      <UpperPane />
      <Attendance />
    </main>
  );
}
